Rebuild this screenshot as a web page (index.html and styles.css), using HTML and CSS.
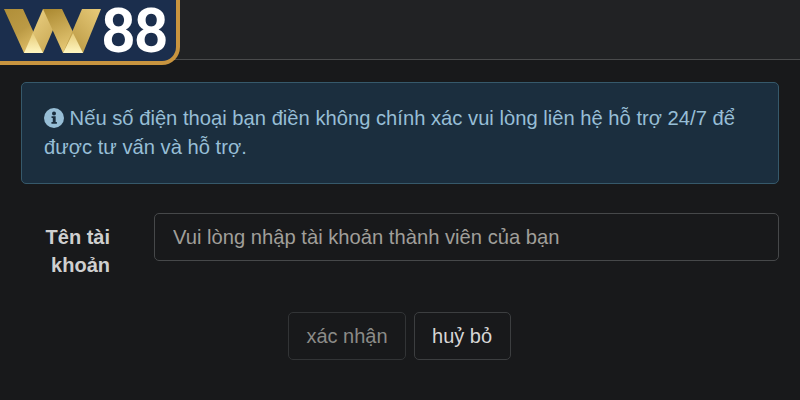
FILE: index.html
```html
<!DOCTYPE html>
<html lang="vi">
<head>
<meta charset="utf-8">
<title>W88</title>
<link rel="stylesheet" href="styles.css">
</head>
<body>
<header class="topbar">
  <div class="logo">
    <svg class="logo-w" width="98" height="44" viewBox="0 0 98 44">
      <defs>
        <linearGradient id="g1" x1="0" y1="0" x2="0.6" y2="1"><stop offset="0" stop-color="#b08e38"/><stop offset="0.55" stop-color="#bb9a45"/><stop offset="1" stop-color="#e0bf68"/></linearGradient>
        <linearGradient id="g2" x1="0" y1="0" x2="0" y2="1"><stop offset="0" stop-color="#e6cb78"/><stop offset="1" stop-color="#fff6c0"/></linearGradient>
        <linearGradient id="g3" x1="0" y1="0" x2="1" y2="1"><stop offset="0" stop-color="#f0d68a"/><stop offset="1" stop-color="#c2a04a"/></linearGradient>
        <linearGradient id="g4" x1="0" y1="1" x2="1" y2="0"><stop offset="0" stop-color="#b29039"/><stop offset="1" stop-color="#e8cb7a"/></linearGradient>
        <linearGradient id="g5" x1="0" y1="0" x2="0.4" y2="1"><stop offset="0" stop-color="#a9872f"/><stop offset="1" stop-color="#e6c875"/></linearGradient>
      </defs>
      <polygon points="0,0 19,0 39,44 20,44" fill="url(#g1)"/>
      <polygon points="20,44 39,0 58,0 39,44" fill="url(#g3)"/>
      <polygon points="39,0 58,0 79,44 59,44" fill="url(#g5)"/>
      <polygon points="59,44 78,0 97,0 79,44" fill="url(#g4)"/>
      <polygon points="29,24 39,44 20,44" fill="url(#g2)"/>
      <polygon points="69,24 79,44 59,44" fill="url(#g2)"/>
    </svg>
    <span class="logo-num">88</span>
  </div>
</header>
<main class="content">
  <div class="alert">
    <svg class="info" width="20" height="20" viewBox="0 0 18 18">
      <circle cx="9" cy="9" r="9" fill="#97bed6"/>
      <circle cx="9" cy="4.9" r="1.8" fill="#1b2e3e"/>
      <path d="M6.8 7.4h3.7v5.2h1.1v1.6H6.7v-1.6h1.2V9H6.8z" fill="#1b2e3e"/>
    </svg>
    Nếu số điện thoại bạn điền không chính xác vui lòng liên hệ hỗ trợ 24/7 để được tư vấn và hỗ trợ.
  </div>
  <div class="form-row">
    <label class="field-label" for="account">Tên tài khoản</label>
    <input class="field-input" id="account" type="text" placeholder="Vui lòng nhập tài khoản thành viên của bạn">
  </div>
  <div class="actions">
    <button class="btn btn-disabled" type="button">xác nhận</button>
    <button class="btn" type="button">huỷ bỏ</button>
  </div>
</main>
</body>
</html>
```
FILE: styles.css
```css
* { box-sizing: border-box; }
html, body { margin: 0; height: 100%; }
body {
  background: #18191b;
  color: #d6d6d6;
  font-family: "Liberation Sans", Arial, sans-serif;
  font-size: 20.2px;
  overflow: hidden;
}
.topbar {
  height: 60px;
  background: #212224;
  border-bottom: 1px solid #4a4b4c;
}
.logo {
  width: 180px;
  height: 65px;
  background: #1b2e4d;
  border-right: 4px solid #c8943f;
  border-bottom: 4px solid #c8943f;
  border-bottom-right-radius: 18px;
  display: flex;
  align-items: center;
  padding-left: 4px;
}
.logo-w { flex: none; }
.logo-num {
  color: #fff;
  font-family: Roboto, "Liberation Sans", sans-serif;
  font-weight: 600;
  font-size: 61px;
  line-height: 50px;
  margin-left: -1px;
  letter-spacing: -2px;
}
.content { padding: 22px 21px 0; }
.alert {
  height: 102px;
  padding: 21px 22px 0;
  background: #1b2e3e;
  border: 1px solid #36596b;
  border-radius: 5px;
  color: #97bed6;
  line-height: 29px;
}
.info { vertical-align: -3px; margin-right: 0; }
.form-row {
  display: flex;
  align-items: flex-start;
  margin-top: 29px;
}
.field-label {
  width: 133px;
  flex: none;
  padding: 10px 44px 0 12px;
  text-align: right;
  font-size: 20px;
  font-weight: 700;
  line-height: 28px;
  color: #cfcfcf;
}
.field-input {
  flex: 1;
  min-width: 0;
  height: 48px;
  padding: 0 18px;
  background: #18191b;
  border: 1px solid #46484a;
  border-radius: 5px;
  font: inherit;
  color: #d6d6d6;
}
.field-input::placeholder { color: #a09f9a; opacity: 1; }
.actions {
  display: flex;
  justify-content: center;
  gap: 8px;
  margin-top: 33px;
  padding-right: 1px;
}
.btn {
  height: 48px;
  min-width: 97px;
  padding: 0 17px;
  background: transparent;
  border: 1px solid #3c3e40;
  border-radius: 5px;
  font: inherit;
  font-size: 20px;
  color: #d6d6d6;
}
.btn-disabled { color: #8b8b88; border-color: #323436; }
```
